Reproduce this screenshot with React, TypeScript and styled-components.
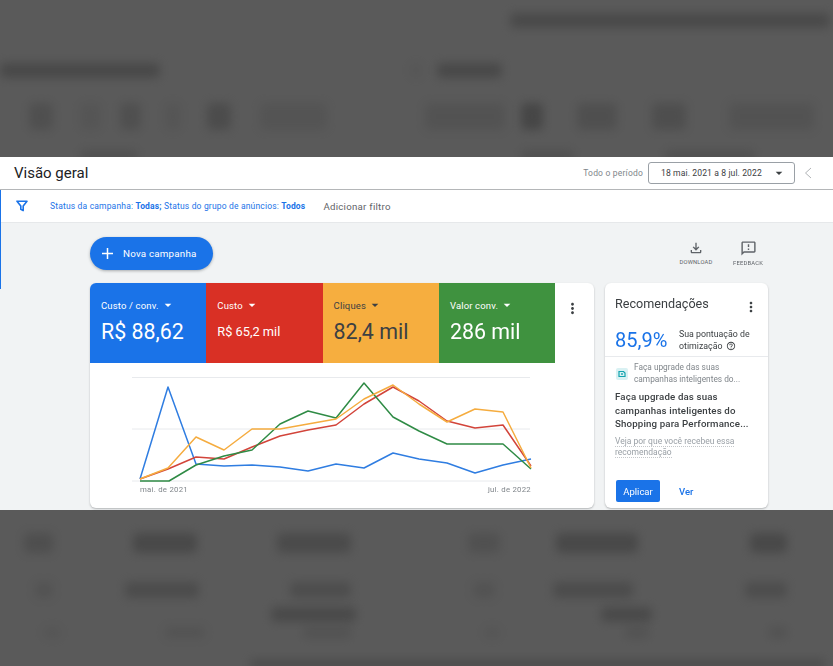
import styled, { createGlobalStyle } from "styled-components";
import {
  MdArrowDropDown,
  MdHelpOutline,
  MdMoreVert,
  MdOutlineFeedback,
  MdOutlineFileDownload,
} from "react-icons/md";

const GlobalStyle = createGlobalStyle`
  html, body {
    margin: 0;
    padding: 0;
    background: #5a5a5a;
    font-family: Roboto, "Liberation Sans", sans-serif;
    overflow: hidden;
  }
`;

const Page = styled.div`
  width: 833px;
  height: 666px;
  display: flex;
  flex-direction: column;
  overflow: hidden;
`;

/* dimmed, blurred page around the panel */
const Shade = styled.div<{ $h: number }>`
  height: ${(p) => p.$h}px;
  flex: none;
  background: #5a5a5a;
  overflow: hidden;
  display: flex;
  flex-direction: column;
`;
const BlurRow = styled.div<{ $top: number; $h: number }>`
  display: flex;
  flex: none;
  margin-top: ${(p) => p.$top}px;
  height: ${(p) => p.$h}px;
`;
const Smudge = styled.div<{ $gap: number; $w: number; $o?: number }>`
  flex: none;
  margin-left: ${(p) => p.$gap}px;
  width: ${(p) => p.$w}px;
  height: 100%;
  background: #434343;
  opacity: ${(p) => p.$o ?? 0.65};
  border-radius: 5px;
  filter: blur(5px);
`;

const Panel = styled.div`
  position: relative;
  height: 353px;
  flex: none;
  display: flex;
  flex-direction: column;
  background: #f1f3f4;
  box-sizing: border-box;
  filter: blur(0.4px);
`;
const Accent = styled.div`
  position: absolute;
  left: 0;
  top: 33px;
  width: 1px;
  height: 99px;
  background: #1a73e8;
`;

const Header = styled.header`
  height: 33px;
  flex: none;
  box-sizing: border-box;
  background: #fff;
  border-bottom: 1px solid #b4b6b8;
  display: flex;
  align-items: center;
  padding: 0 21px 0 14px;
`;
const Title = styled.h1`
  margin: 0;
  font-size: 15px;
  font-weight: 400;
  color: #202124;
  flex: 1;
`;
const PeriodLabel = styled.span`
  font-size: 8.5px;
  letter-spacing: 0.2px;
  color: #80868b;
  margin-right: 5px;
`;
const DateSelect = styled.div`
  width: 147px;
  height: 22px;
  box-sizing: border-box;
  border: 1px solid #9aa0a6;
  border-radius: 3px;
  display: flex;
  align-items: center;
  justify-content: space-between;
  padding: 0 7px 0 12px;
  margin-right: 9px;
  font-size: 8.6px;
  letter-spacing: 0.1px;
  white-space: nowrap;
  color: #3c4043;
  svg {
    flex: none;
  }
`;

const FilterBar = styled.div`
  height: 33px;
  flex: none;
  box-sizing: border-box;
  background: #fff;
  border-bottom: 1px solid #e6e8ea;
  display: flex;
  align-items: center;
  padding-left: 16px;
`;
const FilterText = styled.span`
  margin-left: 22px;
  font-size: 8.5px;
  letter-spacing: 0.17px;
  color: #1a73e8;
  b {
    font-weight: 700;
  }
`;
const AddFilter = styled.span`
  margin-left: 18px;
  font-size: 9.7px;
  letter-spacing: 0.25px;
  color: #5f6368;
`;

const Content = styled.main`
  flex: 1;
  display: flex;
  flex-direction: column;
  padding: 14px 0 0 90px;
  min-height: 0;
`;
const ActionRow = styled.div`
  display: flex;
  align-items: flex-start;
  height: 46px;
  flex: none;
`;
const NewCampaign = styled.button`
  width: 123px;
  height: 33px;
  border: 0;
  border-radius: 17px;
  background: #1a73e8;
  color: #fff;
  font-family: inherit;
  font-size: 9.8px;
  font-weight: 400;
  letter-spacing: 0.2px;
  display: flex;
  align-items: center;
  padding: 0 0 0 11px;
  gap: 9px;
  box-shadow: 0 1px 3px rgba(60, 64, 67, 0.4);
`;
const Tools = styled.div`
  margin-left: auto;
  margin-right: 67px;
  display: flex;
  gap: 16px;
  margin-top: 3px;
`;
const ToolButton = styled.div`
  width: 36px;
  display: flex;
  flex-direction: column;
  align-items: center;
  color: #5f6368;
  font-size: 5.8px;
  letter-spacing: 0.2px;
  svg {
    margin-bottom: 3px;
  }
`;

const CardRow = styled.div`
  display: flex;
  gap: 11px;
  flex: none;
`;
const Card = styled.section`
  background: #fff;
  border-radius: 6px;
  box-shadow: 0 1px 2px rgba(60, 64, 67, 0.35);
  height: 225px;
  overflow: hidden;
`;
const ChartCard = styled(Card)`
  width: 504px;
  display: flex;
  flex-direction: column;
`;
const TileRow = styled.div`
  display: flex;
  height: 80px;
  flex: none;
`;
const Tile = styled.div<{ $bg: string; $fg: string }>`
  width: 116.3px;
  flex: none;
  box-sizing: border-box;
  background: ${(p) => p.$bg};
  color: ${(p) => p.$fg};
  padding: 14px 0 0 11px;
`;
const TileLabel = styled.div`
  display: flex;
  align-items: center;
  font-size: 9.5px;
  letter-spacing: 0.15px;
  height: 16px;
  svg {
    margin-left: 1px;
  }
`;
const TileValue = styled.div<{ $small?: boolean }>`
  height: 30px;
  margin-top: 3px;
  display: flex;
  align-items: center;
  font-size: ${(p) => (p.$small ? 12.8 : 21.4)}px;
`;
const TileMenu = styled.div`
  flex: 1;
  display: flex;
  justify-content: center;
  padding: 17px 5px 0 0;
  color: #3c4043;
`;
const ChartSvg = styled.svg`
  display: block;
  flex: none;
`;
const AxisRow = styled.div`
  display: flex;
  justify-content: space-between;
  padding: 0 63px 0 50px;
  font-size: 7.8px;
  letter-spacing: 0.25px;
  color: #80868b;
`;

const RecCard = styled(Card)`
  width: 163px;
  display: flex;
  flex-direction: column;
`;
const RecHead = styled.div`
  display: flex;
  justify-content: space-between;
  padding: 13px 9px 0 10px;
  height: 27px;
  flex: none;
  font-size: 12.6px;
  color: #3c4043;
  svg {
    margin-top: 3px;
    color: #3c4043;
  }
`;
const ScoreRow = styled.div`
  display: flex;
  align-items: center;
  padding: 0 0 0 10px;
  height: 34px;
  flex: none;
  box-sizing: border-box;
  border-bottom: 1px solid #e8eaed;
`;
const Score = styled.span`
  width: 64px;
  font-size: 20px;
  color: #1a73e8;
  flex: none;
`;
const ScoreText = styled.span`
  font-size: 8.8px;
  line-height: 12px;
  color: #3c4043;
  svg {
    vertical-align: -2px;
    margin-left: 1px;
  }
`;
const RecType = styled.div`
  display: flex;
  align-items: center;
  padding: 5px 0 0 11px;
  font-size: 8.3px;
  line-height: 11.5px;
  color: #80868b;
  flex: none;
  span {
    margin-left: 6px;
  }
`;
const RecTitle = styled.div`
  margin: 5px 0 0 10px;
  font-size: 9.7px;
  line-height: 13.5px;
  font-weight: 500;
  letter-spacing: 0.15px;
  color: #3c4043;
  flex: none;
`;
const RecWhy = styled.div`
  margin: 5px 0 0 10px;
  font-size: 8.5px;
  line-height: 11.5px;
  color: #9aa0a6;
  flex: none;
  span {
    border-bottom: 1px dotted #c4c7ca;
  }
`;
const RecActions = styled.div`
  margin-top: auto;
  display: flex;
  align-items: center;
  padding: 0 0 6px 11px;
`;
const ApplyButton = styled.button`
  width: 44px;
  height: 22px;
  border: 0;
  border-radius: 2px;
  background: #1a73e8;
  color: #fff;
  font-family: inherit;
  font-size: 9.5px;
  font-weight: 400;
  padding: 0;
`;
const ViewLink = styled.span`
  margin-left: 19px;
  font-size: 9.5px;
  font-weight: 500;
  color: #1a73e8;
`;

type Blob = [number, number, number?];
const topRows: { top: number; h: number; items: Blob[] }[] = [
  { top: 13, h: 15, items: [[510, 320, 0.7]] },
  { top: 35, h: 15, items: [[0, 160, 0.75], [250, 12, 0.15], [15, 65, 0.75]] },
  {
    top: 25,
    h: 27,
    items: [
      [29, 24, 0.45], [27, 21, 0.2], [19, 21, 0.45], [24, 16, 0.2], [26, 24, 0.6], [29, 67, 0.25],
      [98, 80, 0.3], [16, 22, 0.85], [34, 40, 0.45], [35, 34, 0.5], [43, 85, 0.3],
    ],
  },
  { top: 20, h: 12, items: [[80, 58, 0.4], [383, 53, 0.4], [91, 90, 0.4]] },
];
const bottomRows: { top: number; h: number; items: Blob[] }[] = [
  { top: 23, h: 20, items: [[24, 29, 0.5], [80, 64, 0.75], [80, 74, 0.65], [117, 32, 0.4], [56, 82, 0.75], [112, 37, 0.75]] },
  { top: 29, h: 16, items: [[35, 18, 0.3], [72, 74, 0.6], [91, 61, 0.55], [122, 22, 0.3], [58, 80, 0.6], [112, 42, 0.55]] },
  { top: 9, h: 15, items: [[271, 85, 0.7], [245, 51, 0.7]] },
  { top: 5, h: 11, items: [[43, 18, 0.2], [104, 40, 0.3], [98, 48, 0.35], [133, 16, 0.2], [125, 24, 0.35], [120, 18, 0.35]] },
  { top: 22, h: 8, items: [[250, 575, 0.7]] },
];

const Blurs = ({ rows }: { rows: typeof topRows }) => (
  <>
    {rows.map((r, i) => (
      <BlurRow key={i} $top={r.top} $h={r.h}>
        {r.items.map(([gap, w, o], j) => (
          <Smudge key={j} $gap={gap} $w={w} $o={o} />
        ))}
      </BlurRow>
    ))}
  </>
);

const series = [
  {
    color: "#2f7de1",
    points:
      "140,478 168,386 196,463 224,465 252,464 280,466 308,470 336,463 364,467 393,452 419,458 447,462 475,472 503,464 531,458",
  },
  {
    color: "#d2443a",
    points:
      "140,478 168,468 196,456 224,458 252,446 280,435 308,429 336,424 364,403 393,386 419,400 447,420 475,427 503,424 531,465",
  },
  {
    color: "#2f8b45",
    points:
      "140,480 169,480 196,464 224,455 252,449 280,423 308,410 336,417 364,382 393,416 419,430 447,443 475,443 503,443 531,468",
  },
  {
    color: "#f5ac3f",
    points:
      "140,478 168,467 196,436 224,449 252,428 280,428 308,423 336,418 364,398 393,384 419,403 447,421 475,408 503,411 531,467",
  },
];

const tiles = [
  { bg: "#1a73e8", fg: "#fff", label: "Custo / conv.", value: "R$ 88,62" },
  { bg: "#d93025", fg: "#fff", label: "Custo", value: "R$ 65,2 mil", small: true },
  { bg: "#f6ae3f", fg: "#3c4043", label: "Cliques", value: "82,4 mil" },
  { bg: "#3f923f", fg: "#fff", label: "Valor conv.", value: "286 mil" },
];

const App = () => {
  return (
    <Page>
      <GlobalStyle />
      <Shade $h={157}>
        <Blurs rows={topRows} />
      </Shade>
      <Panel>
        <Accent />
        <Header>
          <Title>Visão geral</Title>
          <PeriodLabel>Todo o período</PeriodLabel>
          <DateSelect>
            18 mai. 2021 a 8 jul. 2022
            <MdArrowDropDown size={16} color="#3c4043" />
          </DateSelect>
          <svg width="8" height="12" viewBox="0 0 8 12" fill="none">
            <path d="M7 1 1.5 6 7 11" stroke="#b0b3b6" strokeWidth="1" />
          </svg>
        </Header>
        <FilterBar>
          <svg width="12" height="12" viewBox="0 0 12 12" fill="none">
            <path d="M1 1.2h10L7.2 6v4.6L4.8 9.2V6z" stroke="#1a73e8" strokeWidth="1.6" strokeLinejoin="round" />
          </svg>
          <FilterText>
            Status da campanha: <b>Todas;</b> Status do grupo de anúncios: <b>Todos</b>
          </FilterText>
          <AddFilter>Adicionar filtro</AddFilter>
        </FilterBar>
        <Content>
          <ActionRow>
            <NewCampaign>
              <svg width="13" height="13" viewBox="0 0 13 13" fill="none">
                <path d="M6.5 1v11M1 6.5h11" stroke="#fff" strokeWidth="1.5" />
              </svg>
              Nova campanha
            </NewCampaign>
            <Tools>
              <ToolButton>
                <MdOutlineFileDownload size={16} />
                DOWNLOAD
              </ToolButton>
              <ToolButton>
                <MdOutlineFeedback size={17} />
                FEEDBACK
              </ToolButton>
            </Tools>
          </ActionRow>
          <CardRow>
            <ChartCard>
              <TileRow>
                {tiles.map((t) => (
                  <Tile key={t.label} $bg={t.bg} $fg={t.fg}>
                    <TileLabel>
                      {t.label}
                      <MdArrowDropDown size={16} />
                    </TileLabel>
                    <TileValue $small={t.small}>{t.value}</TileValue>
                  </Tile>
                ))}
                <TileMenu>
                  <MdMoreVert size={17} />
                </TileMenu>
              </TileRow>
              <ChartSvg width="504" height="122" viewBox="90 362 504 122" fill="none">
                {[376.5, 428, 480].map((y) => (
                  <path key={y} d={`M132 ${y}H530`} stroke="#e8eaed" strokeWidth="1" />
                ))}
                {series.map((s) => (
                  <polyline key={s.color} points={s.points} stroke={s.color} strokeWidth="1.5" strokeLinejoin="round" />
                ))}
              </ChartSvg>
              <AxisRow>
                <span>mai. de 2021</span>
                <span>jul. de 2022</span>
              </AxisRow>
            </ChartCard>
            <RecCard>
              <RecHead>
                Recomendações
                <MdMoreVert size={16} />
              </RecHead>
              <ScoreRow>
                <Score>85,9%</Score>
                <ScoreText>
                  Sua pontuação de
                  <br />
                  otimização <MdHelpOutline size={10} />
                </ScoreText>
              </ScoreRow>
              <RecType>
                <svg width="12" height="12" viewBox="0 0 12 12" fill="none">
                  <rect width="12" height="12" rx="2" fill="#d9f1f3" />
                  <path d="M3 3.5h4.5l1.5 1.5v3.5H3z" stroke="#12a4af" strokeWidth="1.2" />
                  <circle cx="6" cy="6" r="0.9" fill="#12a4af" />
                </svg>
                <span>
                  Faça upgrade das suas
                  <br />
                  campanhas inteligentes do...
                </span>
              </RecType>
              <RecTitle>
                Faça upgrade das suas
                <br />
                campanhas inteligentes do
                <br />
                Shopping para Performance...
              </RecTitle>
              <RecWhy>
                <span>Veja por que você recebeu essa</span>
                <br />
                <span>recomendação</span>
              </RecWhy>
              <RecActions>
                <ApplyButton>Aplicar</ApplyButton>
                <ViewLink>Ver</ViewLink>
              </RecActions>
            </RecCard>
          </CardRow>
        </Content>
      </Panel>
      <Shade $h={156}>
        <Blurs rows={bottomRows} />
      </Shade>
    </Page>
  );
};

export default App;
